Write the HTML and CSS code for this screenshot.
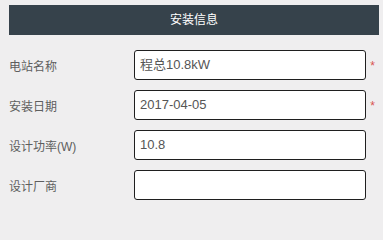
FILE: index.html
```html
<!DOCTYPE html>
<html lang="zh">
<head>
<meta charset="utf-8">
<link rel="stylesheet" href="styles.css">
</head>
<body>
<div class="page">
  <div class="header">安装信息</div>
  <div class="form">
    <div class="row">
      <label class="label">电站名称</label>
      <div class="field">程总10.8kW</div>
      <span class="req">*</span>
    </div>
    <div class="row">
      <label class="label">安装日期</label>
      <div class="field">2017-04-05</div>
      <span class="req">*</span>
    </div>
    <div class="row">
      <label class="label">设计功率(W)</label>
      <div class="field">10.8</div>
      <span class="req"></span>
    </div>
    <div class="row">
      <label class="label">设计厂商</label>
      <div class="field"></div>
      <span class="req"></span>
    </div>
  </div>
</div>
</body>
</html>
```
FILE: styles.css
```css
html, body {
  margin: 0;
  padding: 0;
  background: #efeeef;
  font-family: "Liberation Sans", Arial, "Noto Sans CJK SC", sans-serif;
}
.page {
  padding: 5px 4px 0 9px;
}
.header {
  height: 30px;
  background: #36424b;
  color: #ffffff;
  font-size: 12px;
  line-height: 30px;
  text-align: center;
}
.form {
  margin-top: 15px;
  display: flex;
  flex-direction: column;
  gap: 10px;
}
.row {
  display: grid;
  grid-template-columns: 125px 232px 13px;
  align-items: center;
}
.label {
  font-size: 12px;
  color: #5e5e5e;
}
.field {
  box-sizing: border-box;
  height: 30px;
  background: #ffffff;
  border: 1.5px solid #1f1f1f;
  border-radius: 3px;
  padding: 0 5px;
  font-size: 13px;
  line-height: 27px;
  color: #555555;
}
.req {
  color: #d9534f;
  font-size: 12px;
  text-align: center;
  padding-top: 2px;
}
```
